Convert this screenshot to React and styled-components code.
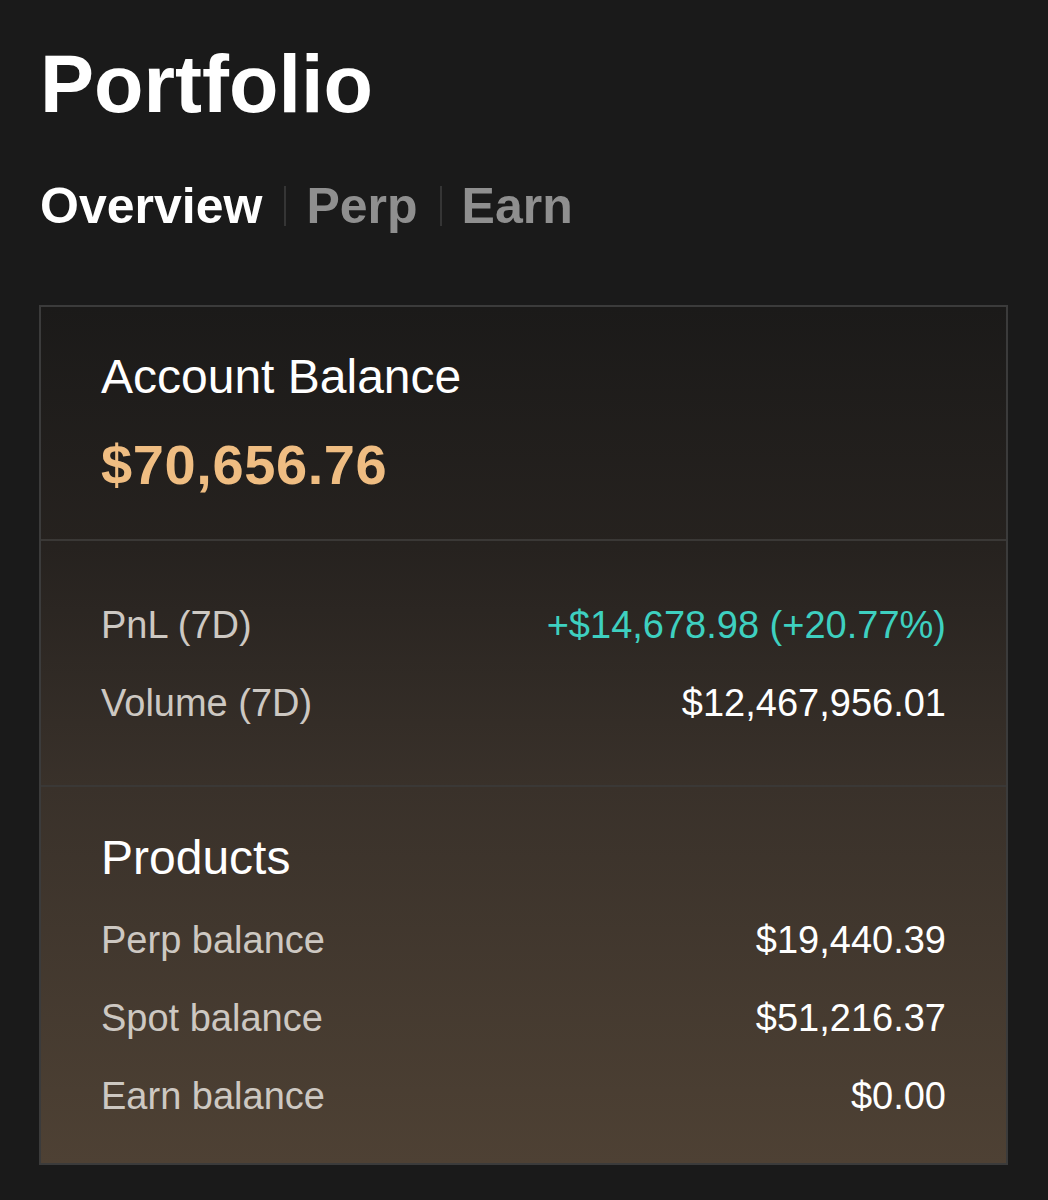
import React from 'react'
import styled, { createGlobalStyle } from 'styled-components'

const GlobalStyle = createGlobalStyle`
  html, body {
    margin: 0;
    padding: 0;
    background: #1a1a1a;
  }
  body {
    font-family: "Liberation Sans", Arial, Helvetica, sans-serif;
    color: #fff;
  }
`

const Page = styled.div`
  padding: 44px 40px 34px 39px;
  min-height: 1200px;
  box-sizing: border-box;
`

const Title = styled.h1`
  margin: 0 0 0 1px;
  font-size: 81px;
  line-height: 1;
  font-weight: 700;
  color: #fff;
`

const Tabs = styled.nav`
  display: flex;
  align-items: center;
  margin: 56px 0 74px 1px;
`

const Tab = styled.span`
  font-size: 50px;
  line-height: 1;
  font-weight: 700;
  color: ${(p) => (p.$active ? '#ffffff' : '#8f8f8f')};
`

const TabSep = styled.span`
  width: 2px;
  height: 40px;
  background: #353535;
  margin: 0 20px 0 22px;
`

const Card = styled.section`
  border: 2px solid #3b3b3b;
  background: linear-gradient(180deg, #1b1a19 0%, #26221f 28%, #39312a 56%, #4e4134 100%);
`

const Block = styled.div`
  padding: ${(p) => p.$pad};
  border-top: ${(p) => (p.$first ? 'none' : '2px solid #3a3836')};
  display: flex;
  flex-direction: column;
`

const Heading = styled.h2`
  margin: 0;
  font-size: 48px;
  line-height: 1;
  font-weight: 400;
  color: #fff;
`

const Amount = styled.div`
  margin-top: 36px;
  font-size: 56px;
  line-height: 1;
  font-weight: 700;
  letter-spacing: 0.6px;
  color: #efbd82;
`

const Rows = styled.div`
  display: flex;
  flex-direction: column;
  gap: 40px;
  margin-top: ${(p) => p.$top || '0'};
`

const Row = styled.div`
  display: flex;
  justify-content: space-between;
  align-items: baseline;
  font-size: 38px;
  line-height: 1;
`

const Label = styled.span`
  color: #cdc8c2;
`

const Value = styled.span`
  color: ${(p) => (p.$up ? '#3ed0c0' : '#ffffff')};
`

export default function App() {
  return (
    <Page>
      <GlobalStyle />
      <Title>Portfolio</Title>
      <Tabs>
        <Tab $active>Overview</Tab>
        <TabSep />
        <Tab>Perp</Tab>
        <TabSep />
        <Tab>Earn</Tab>
      </Tabs>
      <Card>
        <Block $first $pad="46px 60px 46px 60px">
          <Heading>Account Balance</Heading>
          <Amount>$70,656.76</Amount>
        </Block>
        <Block $pad="65px 60px 63px 60px">
          <Rows>
            <Row>
              <Label>PnL (7D)</Label>
              <Value $up>+$14,678.98 (+20.77%)</Value>
            </Row>
            <Row>
              <Label>Volume (7D)</Label>
              <Value>$12,467,956.01</Value>
            </Row>
          </Rows>
        </Block>
        <Block $pad="47px 60px 48px 60px">
          <Heading>Products</Heading>
          <Rows $top="39px">
            <Row>
              <Label>Perp balance</Label>
              <Value>$19,440.39</Value>
            </Row>
            <Row>
              <Label>Spot balance</Label>
              <Value>$51,216.37</Value>
            </Row>
            <Row>
              <Label>Earn balance</Label>
              <Value>$0.00</Value>
            </Row>
          </Rows>
        </Block>
      </Card>
    </Page>
  )
}
